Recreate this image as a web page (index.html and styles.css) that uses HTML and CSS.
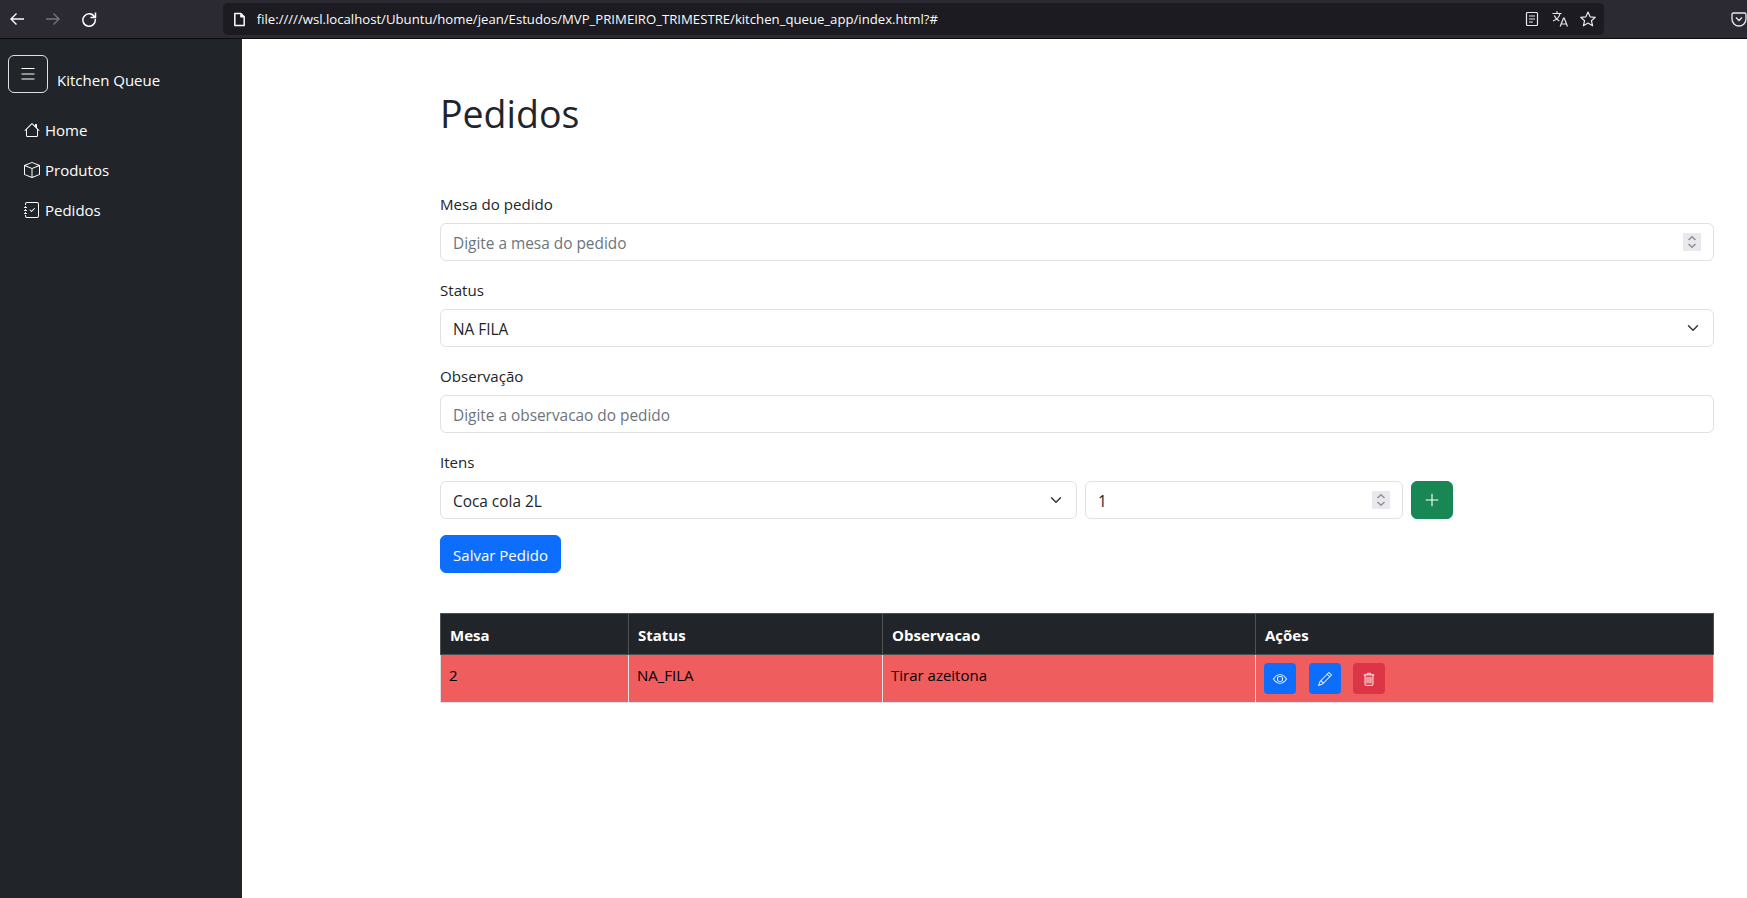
FILE: index.html
```html
<!DOCTYPE html>
<html lang="pt-BR">
<head>
<meta charset="utf-8">
<title>Kitchen Queue</title>
<link rel="stylesheet" href="styles.css">
</head>
<body>
<header class="chrome">
  <div class="nav-icons">
    <svg class="ci" viewBox="0 0 16 16"><path d="M15 8H2M7.500 2.500 2 8l5.500 5.500" fill="none" stroke="#fbfbfe" stroke-width="1.400"/></svg>
    <svg class="ci" viewBox="0 0 16 16"><path d="M1 8h13M8.500 2.500 14 8l-5.500 5.500" fill="none" stroke="#75747c" stroke-width="1.400"/></svg>
    <svg class="ci" viewBox="0 0 16 16"><path d="M13.600 6.200A6.200 6.200 0 1 0 14.200 8M14.500 1.500v5H9.500" fill="none" stroke="#fbfbfe" stroke-width="1.500"/></svg>
  </div>
  <div class="urlbar">
    <svg class="ci-page" viewBox="0 0 16 16"><path d="M3 1.500h6.500L13 5v9.500H3zM9.500 1.500V5H13" fill="none" stroke="#fbfbfe" stroke-width="1.600" stroke-linejoin="round"/></svg>
    <span class="url">file://///wsl.localhost/Ubuntu/home/jean/Estudos/MVP_PRIMEIRO_TRIMESTRE/kitchen_queue_app/index.html?#</span>
    <div class="url-actions">
      <svg class="ci-sm" viewBox="0 0 16 16"><path d="M2.500 2.500A1 1 0 0 1 3.500 1.500h9a1 1 0 0 1 1 1v11a1 1 0 0 1-1 1h-9a1 1 0 0 1-1-1zM5 5h6M5 8h6M5 11h4" fill="none" stroke="#e8e8ec" stroke-width="1.200"/></svg>
      <svg class="ci-tr" viewBox="0 0 16 16"><path d="M0.500 2.500h9M5 .3v2.200M8 2.500c-.6 3.500-3 6-7 7.500M2.300 4.500c1 2.500 3 4.500 5 5.500M8.200 15.500l3.300-8.500h.7l3.300 8.500M9.400 13h5.200" fill="none" stroke="#e8e8ec" stroke-width="1.200"/></svg>
      <svg class="ci-sm" viewBox="0 0 16 16"><path d="M8 1 10.100 5.800l5.200.5-3.900 3.400 1.200 5.100L8 12.100l-4.600 2.700 1.200-5.100L.7 6.300l5.200-.5z" fill="none" stroke="#e8e8ec" stroke-width="1.200" stroke-linejoin="round"/></svg>
    </div>
  </div>
  <div class="pocket">
    <svg class="ci" viewBox="0 0 16 16"><path d="M2.500 2h11A1.500 1.500 0 0 1 15 3.500V8a7 7 0 0 1-14 0V3.500A1.500 1.500 0 0 1 2.500 2zM5 6.500l3 3 3-3" fill="none" stroke="#e8e8ec" stroke-width="1.300"/></svg>
  </div>
</header>
<div class="shell">
  <aside class="sidebar">
    <div class="brand">
      <button class="toggler" type="button" aria-label="Menu">
        <svg viewBox="0 0 16 16" class="tog-i"><path d="M1.500 2.500h13M1.500 8h13M1.500 13h13" fill="none" stroke="#fff" stroke-width="1.200"/></svg>
      </button>
      <span class="brand-name">Kitchen Queue</span>
    </div>
    <nav class="side-nav">
      <a class="side-link" href="#">
        <svg class="side-i" viewBox="0 0 16 16"><path fill="currentColor" d="M8.707 1.500a1 1 0 0 0-1.414 0L.646 8.146a.5.5 0 0 0 .708.708L2 8.207V13.500A1.500 1.500 0 0 0 3.500 15h9a1.500 1.500 0 0 0 1.500-1.500V8.207l.646.647a.5.5 0 0 0 .708-.708L13 5.793V2.500a.5.5 0 0 0-.5-.5h-1a.5.5 0 0 0-.5.500v1.293zM13 7.207V13.500a.5.5 0 0 1-.5.5h-9a.5.5 0 0 1-.5-.5V7.207l5-5z"/></svg>
        Home
      </a>
      <a class="side-link" href="#">
        <svg class="side-i" viewBox="0 0 16 16"><path fill="currentColor" d="M8.186 1.113a.5.5 0 0 0-.372 0L1.846 3.500 8 5.961 14.154 3.500zM15 4.239l-6.500 2.600v7.922l6.500-2.600V4.240zM7.500 14.762V6.838L1 4.239v7.925zM7.443.184a1.500 1.500 0 0 1 1.114 0l7.129 2.852A.5.500 0 0 1 16 3.500v8.662a1 1 0 0 1-.629.928l-7.185 2.874a.5.500 0 0 1-.372 0L.63 13.090a1 1 0 0 1-.63-.928V3.500a.5.500 0 0 1 .314-.464z"/></svg>
        Produtos
      </a>
      <a class="side-link" href="#">
        <svg class="side-i" viewBox="0 0 16 16"><path fill="currentColor" d="M10.854 6.146a.5.5 0 0 1 0 .708l-3 3a.5.5 0 0 1-.708 0l-1.500-1.500a.5.5 0 1 1 .708-.708L7.500 8.793l2.646-2.647a.5.5 0 0 1 .708 0"/><path fill="currentColor" d="M3 0h10a2 2 0 0 1 2 2v12a2 2 0 0 1-2 2H3a2 2 0 0 1-2-2v-1h1v1a1 1 0 0 0 1 1h10a1 1 0 0 0 1-1V2a1 1 0 0 0-1-1H3a1 1 0 0 0-1 1v1H1V2a2 2 0 0 1 2-2"/><path fill="currentColor" d="M1 5v-.500a.5.5 0 0 1 1 0V5h.5a.5.5 0 0 1 0 1h-2a.5.5 0 0 1 0-1zm0 3v-.500a.5.5 0 0 1 1 0V8h.5a.5.5 0 0 1 0 1h-2a.5.5 0 0 1 0-1zm0 3v-.500a.5.5 0 0 1 1 0v.500h.5a.5.5 0 0 1 0 1h-2a.5.5 0 0 1 0-1z"/></svg>
        Pedidos
      </a>
    </nav>
  </aside>
  <main class="content">
    <h1 class="title">Pedidos</h1>
    <form class="order-form">
      <div class="field">
        <label class="lbl" for="mesa">Mesa do pedido</label>
        <div class="num-wrap">
          <input class="ctl" id="mesa" type="text" placeholder="Digite a mesa do pedido">
          <span class="spin"><svg viewBox="0 0 18 18"><path d="M5.500 7 9 3.800 12.500 7M5.500 11 9 14.200 12.500 11" fill="none" stroke="#8f8f9d" stroke-width="1.500"/></svg></span>
        </div>
      </div>
      <div class="field">
        <label class="lbl" for="status">Status</label>
        <select class="ctl sel" id="status"><option>NA FILA</option></select>
      </div>
      <div class="field">
        <label class="lbl" for="obs">Observação</label>
        <input class="ctl" id="obs" type="text" placeholder="Digite a observacao do pedido">
      </div>
      <div class="field">
        <label class="lbl" for="item">Itens</label>
        <div class="item-row">
          <select class="ctl sel" id="item"><option>Coca cola 2L</option></select>
          <div class="num-wrap">
            <input class="ctl" type="text" value="1" aria-label="Quantidade">
            <span class="spin"><svg viewBox="0 0 18 18"><path d="M5.500 7 9 3.800 12.500 7M5.500 11 9 14.200 12.500 11" fill="none" stroke="#8f8f9d" stroke-width="1.500"/></svg></span>
          </div>
          <button class="btn-add" type="button" aria-label="Adicionar">
            <svg viewBox="0 0 16 16"><path d="M8 1.700v12.600M1.700 8h12.600" fill="none" stroke="#fff" stroke-width="1.100"/></svg>
          </button>
        </div>
      </div>
      <button class="btn-save" type="button">Salvar Pedido</button>
    </form>
    <table class="orders">
      <colgroup><col class="c1"><col class="c2"><col class="c3"><col></colgroup>
      <thead>
        <tr><th>Mesa</th><th>Status</th><th>Observacao</th><th>Ações</th></tr>
      </thead>
      <tbody>
        <tr>
          <td>2</td><td>NA_FILA</td><td>Tirar azeitona</td>
          <td>
            <div class="acts">
              <button class="act blue" type="button" aria-label="Ver">
                <svg viewBox="0 0 16 16"><path fill="currentColor" d="M16 8s-3-5.500-8-5.500S0 8 0 8s3 5.500 8 5.500S16 8 16 8M1.173 8a13 13 0 0 1 1.660-2.043C4.120 4.668 5.880 3.500 8 3.500s3.879 1.168 5.168 2.457A13 13 0 0 1 14.828 8q-.086.130-.195.288c-.335.480-.830 1.120-1.465 1.755C11.879 11.332 10.119 12.500 8 12.500s-3.879-1.168-5.168-2.457A13 13 0 0 1 1.172 8z"/><path fill="currentColor" d="M8 5.500a2.500 2.500 0 1 0 0 5 2.500 2.500 0 0 0 0-5M4.500 8a3.500 3.500 0 1 1 7 0 3.500 3.500 0 0 1-7 0"/></svg>
              </button>
              <button class="act blue" type="button" aria-label="Editar">
                <svg viewBox="0 0 16 16"><path fill="currentColor" d="M12.146.146a.5.5 0 0 1 .708 0l3 3a.5.5 0 0 1 0 .708l-10 10a.5.5 0 0 1-.168.110l-5 2a.5.5 0 0 1-.650-.650l2-5a.5.5 0 0 1 .110-.168zM11.207 2.500 13.500 4.793 14.793 3.500 12.500 1.207zm1.586 3L10.500 3.207 4 9.707V10h.5a.5.5 0 0 1 .5.500v.500h.5a.5.5 0 0 1 .5.500v.500h.293zm-9.761 5.175-.106.106-1.528 3.821 3.821-1.528.106-.106A.5.5 0 0 1 5 12.500V12h-.5a.5.5 0 0 1-.5-.500V11h-.5a.5.5 0 0 1-.468-.325"/></svg>
              </button>
              <button class="act red" type="button" aria-label="Excluir">
                <svg viewBox="0 0 16 16"><path d="M2 3.300h12M6 3V1.500h4V3M3.500 3.500v10.800a1 1 0 0 0 1 1h7a1 1 0 0 0 1-1V3.500M5.800 5.500v7.500M8 5.500v7.500M10.200 5.500v7.500" fill="none" stroke="currentColor" stroke-width="1.100"/></svg>
              </button>
            </div>
          </td>
        </tr>
      </tbody>
    </table>
  </main>
</div>
</body>
</html>
```
FILE: styles.css
```css
* { box-sizing: border-box; }
html, body { margin: 0; height: 100%; }
body {
  display: flex;
  flex-direction: column;
  height: 898px;
  overflow: hidden;
  font-family: "Open Sans", "Noto Sans", sans-serif;
  font-size: 15px;
  line-height: 24px;
  color: #212529;
  background: #fff;
}
.chrome {
  flex: none;
  height: 39px;
  display: flex;
  align-items: center;
  background: #2b2a33;
  border-bottom: 1px solid #0c0c0d;
  overflow: hidden;
}
.nav-icons { display: flex; gap: 20px; width: 223px; padding-left: 9px; }
.ci { width: 16px; height: 16px; display: block; flex: none; }
.urlbar {
  width: 1383px;
  height: 32px;
  background: #1c1b22;
  border-radius: 5px;
  display: flex;
  align-items: center;
  padding-left: 9px;
  color: #fbfbfe;
}
.ci-page { width: 15px; height: 15px; flex: none; }
.url { margin-left: 10px; font-size: 13.160px; white-space: nowrap; }
.url-actions { margin-left: auto; display: flex; align-items: center; gap: 12px; padding-right: 8px; }
.ci-sm { width: 16px; height: 16px; }
.ci-tr { width: 16px; height: 16px; }
.pocket { margin-left: 127px; width: 16px; flex: none; }
.shell { flex: 1; display: flex; min-height: 0; }
.sidebar { flex: none; width: 242px; background: #212529; color: #fff; padding-top: 16px; }
.brand { display: flex; align-items: flex-end; padding-left: 8px; }
.toggler {
  width: 40px;
  height: 38px;
  padding: 0;
  background: none;
  border: 1px solid #dee2e6;
  border-radius: 6px;
  display: flex;
  align-items: center;
  justify-content: center;
}
.tog-i { width: 16px; height: 16px; }
.brand-name { margin-left: 9px; font-size: 15px; line-height: 24px; margin-bottom: 1px; }
.side-nav { display: flex; flex-direction: column; margin-top: 25px; padding-left: 24px; gap: 16px; }
.side-link { display: flex; align-items: center; gap: 5px; color: #fff; text-decoration: none; height: 24px; }
.side-i { width: 16px; height: 16px; flex: none; }
.content { flex: 1; min-width: 0; padding: 51px 33px 0 198px; }
.title { margin: 0 0 53px; font-size: 37.500px; line-height: 48px; font-weight: 400; }
.order-form { margin-bottom: 40px; }
.field { margin-bottom: 16px; }
.lbl { display: block; margin-bottom: 6px; font-size: 15.100px; line-height: 26px; }
.ctl {
  display: block;
  width: 100%;
  height: 38px;
  padding: 7px 12px 5px;
  font: inherit;
  font-size: 15.400px;
  color: #212529;
  background: #fff;
  border: 1px solid #dee2e6;
  border-radius: 6px;
  outline: none;
}
.ctl::placeholder { color: #6c757d; opacity: 1; }
.sel {
  appearance: none;
  padding: 8px 12px 4px;
  background-image: url("data:image/svg+xml,%3csvg xmlns='http://www.w3.org/2000/svg' viewBox='0 0 16 16'%3e%3cpath fill='none' stroke='%23343a40' stroke-linecap='round' stroke-linejoin='round' stroke-width='2' d='m2 5 6 6 6-6'/%3e%3c/svg%3e");
  background-repeat: no-repeat;
  background-position: right 12px center;
  background-size: 16px 12px;
}
.num-wrap { position: relative; }
.spin {
  position: absolute;
  top: 10px;
  right: 13px;
  width: 18px;
  height: 18px;
  background: #e9e9ed;
}
.spin svg { display: block; width: 18px; height: 18px; }
.item-row { display: grid; grid-template-columns: 637px 318px 42px; column-gap: 8px; }
.btn-add {
  height: 38px;
  padding: 0;
  background: #198754;
  border: 1px solid #198754;
  border-radius: 6px;
  display: flex;
  align-items: center;
  justify-content: center;
}
.btn-add svg { width: 16px; height: 16px; }
.btn-save {
  display: block;
  width: 121px;
  height: 38px;
  padding: 1px 0 0;
  font: inherit;
  color: #fff;
  background: #0d6efd;
  border: 1px solid #0d6efd;
  border-radius: 6px;
}
.orders { width: 1274px; table-layout: fixed; border-collapse: collapse; }
.c1 { width: 188px; }
.c2 { width: 254px; }
.c3 { width: 373px; }
.orders th {
  height: 41px;
  padding: 9px 8px 7px 9px;
  text-align: left;
  font-weight: 700;
  color: #fff;
  background: #212529;
  border: 1px solid #4d5154;
}
.orders td {
  height: 48px;
  padding: 8px;
  color: #000;
  background: #ef5d5f;
  border: 1px solid #dee2e6;
  vertical-align: top;
}
.acts { display: flex; gap: 12.500px; }
.act {
  width: 32px;
  height: 31px;
  padding: 0;
  border: none;
  border-radius: 4px;
  color: #fff;
}
.act svg { width: 14px; height: 14px; display: block; margin: 0 auto; }
.blue { background: #0d6efd; }
.red { background: #dc3545; }
```
